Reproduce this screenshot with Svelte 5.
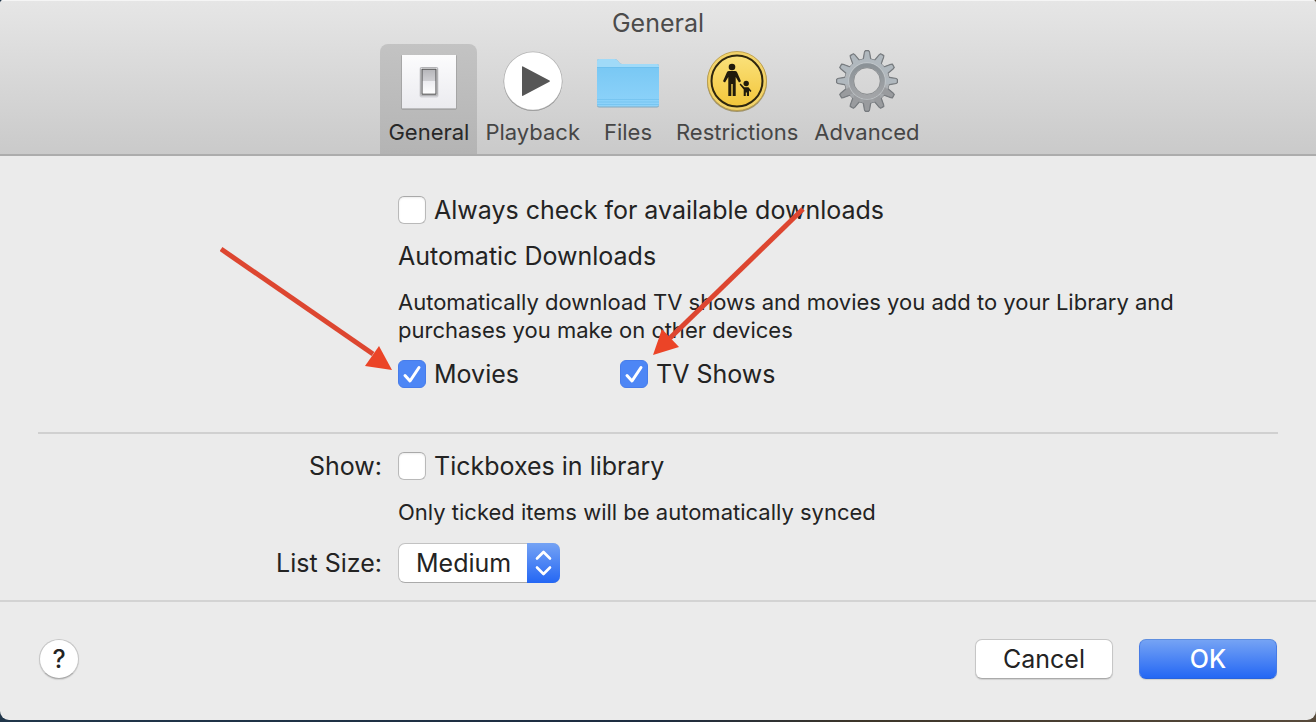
<script>
  const tabs = ['General', 'Playback', 'Files', 'Restrictions', 'Advanced'];
  const sizes = ['Small', 'Medium', 'Large'];
  const teeth = Array.from({ length: 12 }, (_, i) => i * 30);

  let active = $state('General');
  let alwaysCheck = $state(false);
  let movies = $state(true);
  let tvShows = $state(true);
  let tickboxes = $state(false);
  let listSize = $state('Medium');
</script>

<div class="desktop">
  <div class="window">
    <header>
      <h1>General</h1>
      <nav>
        {#each tabs as tab}
          <button class="tab" class:active={active === tab} onclick={() => (active = tab)}>
            {#if tab === 'General'}
              <svg class="icon" viewBox="0 0 64 64" aria-hidden="true">
                <defs>
                  <linearGradient id="plate" x2="0" y2="1"><stop offset="0" stop-color="#fcfcfd" /><stop offset="1" stop-color="#ebebef" /></linearGradient>
                  <linearGradient id="rocker" x2="0" y2="1"><stop offset="0" stop-color="#b5b5b9" /><stop offset=".46" stop-color="#cfcfd3" /><stop offset=".48" stop-color="#ececf0" /><stop offset="1" stop-color="#fff" /></linearGradient>
                </defs>
                <rect x="4.500" y="5" width="55" height="54.500" rx="1" fill="#8d8d8d" />
                <rect x="5" y="5" width="54" height="53.500" fill="url(#plate)" />
                <rect x="22.500" y="17" width="19" height="30.500" rx="2" fill="#aaaab0" opacity=".45" />
                <rect x="23.500" y="17.500" width="17" height="28" rx="1" fill="#fff" stroke="#a3a3a7" stroke-width=".8" />
                <rect x="25" y="19.200" width="14" height="25" fill="url(#rocker)" stroke="#505052" stroke-width="1.100" />
              </svg>
            {:else if tab === 'Playback'}
              <svg class="icon" viewBox="0 0 64 64" aria-hidden="true">
                <circle cx="32" cy="31.800" r="29.300" fill="#8d8d8d" />
                <circle cx="32" cy="31" r="29.500" fill="#b4b4b4" />
                <circle cx="32" cy="31" r="28.800" fill="#fff" />
                <path d="M22 16.500 48.500 30.500Q49.500 31 48.500 31.700L22 45.800Q21 46.200 21 45.200V17Q21 16 22 16.500Z" fill="#565656" />
              </svg>
            {:else if tab === 'Files'}
              <svg class="icon" viewBox="0 0 64 64" aria-hidden="true">
                <defs><linearGradient id="folder" x2="0" y2="1"><stop offset="0" stop-color="#79c8f4" /><stop offset="1" stop-color="#8ed3fa" /></linearGradient></defs>
                <path d="M1 14V11Q1 9 3 9H19Q21 9 22.500 11.500T26 14H61Q63 14 63 16V55.500Q63 57.500 61 57.500H3Q1 57.500 1 55.500Z" fill="#6b9cb7" opacity=".75" />
                <path d="M1 19V11Q1 9 3 9H19Q21 9 22.500 11.500T26 14H61Q63 14 63 16V19Z" fill="#a0daf8" />
                <path d="M1 17H63V54.500Q63 56.500 61 56.500H3Q1 56.500 1 54.500Z" fill="url(#folder)" />
                <path d="M1 17.500H63M1 49.500H63M1 52H63M1 54.500H63" stroke="#62b7e7" stroke-width=".8" opacity=".6" />
              </svg>
            {:else if tab === 'Restrictions'}
              <svg class="icon" viewBox="0 0 64 64" aria-hidden="true">
                <defs><linearGradient id="sign" x2="0" y2="1"><stop offset="0" stop-color="#fae17b" /><stop offset="1" stop-color="#f3c63a" /></linearGradient></defs>
                <circle cx="32" cy="32" r="30" fill="#8d7d49" opacity=".75" />
                <circle cx="32" cy="31" r="29.500" fill="#f2d36a" stroke="#b99943" stroke-width=".8" />
                <circle cx="32" cy="31" r="25.500" fill="url(#sign)" stroke="#2e260e" stroke-width="2" />
                <g fill="#211b0c" transform="translate(0 -1)">
                  <circle cx="27" cy="18" r="3.300" />
                  <path d="M24 22H30Q31.500 22 32.200 23.400L36 32.200 34 33.500 30.700 28V47H27.700V35H26.300V47H23.300V28L20 33.500 18 32.200 21.800 23.400Q22.500 22 24 22Z" />
                  <circle cx="41.200" cy="34.500" r="2.700" />
                  <path d="M35.500 34.600 39.300 38.300H43.500L46.500 42 45.300 43 44 41.500V47H41.900V43.500H40.800V47H38.700V40.500L34.600 35.500Z" />
                </g>
              </svg>
            {:else}
              <svg class="icon" viewBox="0 0 64 64" aria-hidden="true">
                <defs>
                  <linearGradient id="metal" gradientUnits="userSpaceOnUse" x1="0" y1="1" x2="0" y2="63"><stop offset="0" stop-color="#b0bac1" /><stop offset=".5" stop-color="#b2b6ba" /><stop offset="1" stop-color="#939598" /></linearGradient>
                  <linearGradient id="ring" x2="0" y2="1"><stop offset="0" stop-color="#8b9297" /><stop offset="1" stop-color="#a3a5a8" /></linearGradient>
                  <mask id="hole"><rect width="64" height="64" fill="#fff" /><circle cx="32" cy="31" r="13.300" fill="#000" /></mask>
                </defs>
                <g mask="url(#hole)">
                  <g transform="translate(0 -1)">
                    <g fill="#75797d" stroke="#75797d" stroke-width="1" stroke-linejoin="round">
                      {#each teeth as angle}
                        <path d="M27.800 12 29.400 3 30.100 1.500H33.900L34.600 3 36.200 12Z" transform="rotate({angle} 32 32)" />
                      {/each}
                      <circle cx="32" cy="32" r="22.300" />
                    </g>
                    <circle cx="32" cy="32" r="22.200" fill="url(#metal)" />
                    {#each teeth as angle}
                      <path d="M28.200 14 30 3.500 30.600 2.200H33.400L34 3.500 35.800 14Z" fill={angle > 90 && angle < 270 ? '#999b9e' : '#b0b8be'} transform="rotate({angle} 32 32)" />
                    {/each}
                    <circle cx="32" cy="32" r="18.300" fill="none" stroke="#c5cacd" stroke-width=".8" />
                    <circle cx="32" cy="32" r="15.600" fill="none" stroke="url(#ring)" stroke-width="4.400" />
                  </g>
                </g>
                <circle cx="32" cy="31" r="13.300" fill="none" stroke="#7b7f82" stroke-width=".8" />
              </svg>
            {/if}
            <span>{tab}</span>
          </button>
        {/each}
      </nav>
    </header>

    <main>
      <section>
        <div class="field">
          <label class="check"><input type="checkbox" bind:checked={alwaysCheck} />Always check for available downloads</label>
          <h2>Automatic Downloads</h2>
          <p class="intro">Automatically download TV shows and movies you add to your Library and purchases you make on other devices</p>
          <div class="options">
            <div class="option">
              <label class="check"><input type="checkbox" bind:checked={movies} />Movies</label>
              <svg class="arrow to-movies" width="174" height="126" viewBox="0 0 174 126" aria-hidden="true">
                <path d="M1 3 153 108" stroke="#dd4630" stroke-width="5" />
                <path d="M159 100 145 120 172 124Z" fill="#eb4427" />
              </svg>
            </div>
            <div class="option">
              <label class="check"><input type="checkbox" bind:checked={tvShows} />TV Shows</label>
              <svg class="arrow to-shows" width="154" height="150" viewBox="0 0 154 150" aria-hidden="true">
                <path d="M151 3 18 132" stroke="#dd4630" stroke-width="5" />
                <path d="M10 123 27 141 1 149Z" fill="#eb4427" />
              </svg>
            </div>
          </div>
        </div>
      </section>
      <hr />
      <section>
        <span class="caption">Show:</span>
        <div class="field">
          <label class="check"><input type="checkbox" bind:checked={tickboxes} />Tickboxes in library</label>
          <p>Only ticked items will be automatically synced</p>
        </div>
        <label class="caption size-caption" for="list-size">List Size:</label>
        <div class="field">
          <div class="popup">
            <select id="list-size" bind:value={listSize}>
              {#each sizes as size}<option>{size}</option>{/each}
            </select>
            <svg width="33" height="40" viewBox="0 0 33 40" aria-hidden="true">
              <path d="M10 15.500 16.500 9 23 15.500M10 24.500 16.500 31 23 24.500" fill="none" stroke="#fff" stroke-width="2.600" stroke-linecap="round" stroke-linejoin="round" />
            </svg>
          </div>
        </div>
      </section>
    </main>

    <footer>
      <button class="help" aria-label="Help">?</button>
      <button class="push">Cancel</button>
      <button class="push primary">OK</button>
    </footer>
  </div>
</div>

<style>
  :global(body) {
    margin: 0;
  }
  .desktop {
    box-sizing: border-box;
    min-height: 100vh;
    padding-bottom: 2px;
    display: flex;
    background: linear-gradient(90deg, #20364a, #1d2c40 50%, #3c3529 65%, #574a3b);
    font: 25px/28px Inter, "Liberation Sans", sans-serif;
    color: #232323;
  }
  .window {
    flex: 1;
    display: flex;
    flex-direction: column;
    border-radius: 4px 4px 9px 9px;
    overflow: hidden;
    background: #ebebeb;
  }
  header {
    display: flex;
    flex-direction: column;
    align-items: center;
    background: linear-gradient(#e6e6e6, #cacaca);
    border-bottom: 2px solid #acacac;
    box-shadow: inset 0 1px #f5f5f5;
  }
  h1 {
    margin: 0;
    padding: 9px 0 7px;
    font-size: 25px;
    font-weight: 400;
    line-height: 28px;
    color: #4b4b4b;
  }
  button,
  select {
    font: inherit;
    color: inherit;
    margin: 0;
  }
  nav {
    display: flex;
    padding-right: 8px;
  }
  .tab {
    box-sizing: border-box;
    min-width: 80px;
    height: 110px;
    padding: 6px 8px 0;
    display: flex;
    flex-direction: column;
    align-items: center;
    gap: 4px;
    border: 0;
    border-radius: 8px 8px 0 0;
    background: none;
    font-size: 22px;
    color: #464646;
  }
  .tab.active {
    background: linear-gradient(#c3c3c3, #b4b4b4);
    color: #282828;
  }
  .icon {
    width: 64px;
    height: 64px;
    flex: none;
  }
  main {
    padding: 40px 38px 17px;
  }
  section {
    display: grid;
    grid-template-columns: 344px minmax(0, 1fr);
    column-gap: 16px;
    row-gap: 17px;
  }
  .field {
    grid-column: 2;
  }
  .caption {
    text-align: right;
  }
  .size-caption {
    line-height: 40px;
  }
  .check {
    display: inline-flex;
    align-items: center;
    gap: 8px;
    height: 28px;
    white-space: nowrap;
    vertical-align: top;
  }
  .check input {
    appearance: none;
    box-sizing: border-box;
    width: 28px;
    height: 28px;
    margin: 0;
    border: 1px solid #b9b9b9;
    border-top-color: #a9a9a9;
    border-radius: 6px;
    background: #fff;
    box-shadow: inset 0 1px 2px #ececec;
  }
  .check input:checked {
    border-color: #477cea;
    box-shadow: none;
    background: #4d86f5 url("data:image/svg+xml,%3Csvg xmlns='http://www.w3.org/2000/svg' viewBox='0 0 26 26'%3E%3Cpath d='M6 14.500 11 20 20 6.500' fill='none' stroke='white' stroke-width='3' stroke-linecap='round' stroke-linejoin='round'/%3E%3C/svg%3E") center / 26px 26px no-repeat;
  }
  h2 {
    margin: 18px 0;
    font-size: 25px;
    font-weight: 400;
    line-height: 28px;
  }
  p {
    margin: 18px 0 0;
    font-size: 22px;
  }
  .intro {
    max-width: 800px;
  }
  .options {
    display: grid;
    grid-template-columns: repeat(2, 222px);
    margin-top: 16px;
  }
  .option {
    position: relative;
  }
  .arrow {
    position: absolute;
    pointer-events: none;
  }
  .to-movies {
    right: 100%;
    bottom: 16px;
    margin-right: 4px;
  }
  .to-shows {
    left: 32px;
    bottom: 32px;
  }
  hr {
    height: 2px;
    margin: 44px 0 18px;
    border: 0;
    background: #d0d0d0;
  }
  .popup {
    position: relative;
    width: 162px;
    height: 40px;
  }
  .popup select {
    appearance: none;
    width: 100%;
    height: 100%;
    padding: 0 40px 0 17px;
    border: 1px solid #c2c2c2;
    border-bottom-color: #aaa;
    border-radius: 7px;
    background: #fff;
  }
  .popup svg {
    position: absolute;
    top: 0;
    right: 0;
    border-radius: 0 7px 7px 0;
    background: linear-gradient(#75a3f4, #2467f4);
    pointer-events: none;
  }
  footer {
    flex: 1;
    display: flex;
    align-items: flex-start;
    gap: 26px;
    padding: 37px 39px 41px;
    border-top: 2px solid #d3d3d3;
  }
  .help,
  .push {
    box-sizing: border-box;
    height: 40px;
    padding: 0;
    border: 1px solid #c6c6c6;
    border-bottom-color: #aaa;
    background: #fff;
    box-shadow: 0 1px 1px #d0d0d0;
  }
  .help {
    width: 40px;
    margin-right: auto;
    border-radius: 50%;
    font-weight: 500;
  }
  .push {
    width: 138px;
    border-radius: 7px;
  }
  .primary {
    border-color: #5e8edf #467be6 #2863de;
    background: linear-gradient(#75a3f4, #2467f4);
    color: #fff;
    font-weight: 500;
  }
</style>
